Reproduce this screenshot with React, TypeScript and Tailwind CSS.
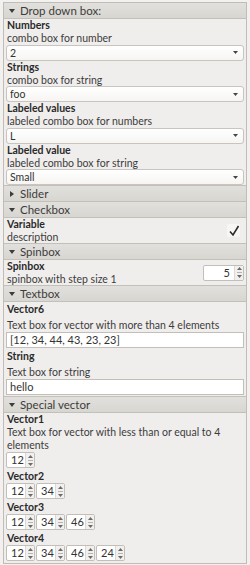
import { ReactNode } from "react"

const Header = ({ title, open = true }: { title: string; open?: boolean }) => (
	<div className="h-[16px] flex items-center border-b border-[#c3c0ba] bg-gradient-to-b from-[#e2e0dc] to-[#d8d6d1] text-[#3c3c3c]">
		<div className="w-[14px] flex justify-center pl-[2px]">
			{open ? (
				<svg width="6" height="4" viewBox="0 0 6 4"><polygon points="0,0 6,0 3,4" fill="#3c3c3c" /></svg>
			) : (
				<svg width="4" height="6" viewBox="0 0 4 6"><polygon points="0,0 4,3 0,6" fill="#3c3c3c" /></svg>
			)}
		</div>
		<span className="pl-[2px] text-[11.5px] leading-[14px]">{title}</span>
	</div>
)

const Label = ({ children }: { children: ReactNode }) => (
	<div className="font-bold leading-[13px] text-[#2a2a2a]">{children}</div>
)

const Desc = ({ children, tight = false }: { children: ReactNode; tight?: boolean }) => (
	<div className={tight ? "leading-[12.5px] text-[#3c3c3c]" : "leading-[13px] text-[#3c3c3c]"}>{children}</div>
)

const Combo = ({ value }: { value: string }) => (
	<div className="h-[16px] flex items-center justify-between rounded-[3px] border border-[#c8c4be] bg-gradient-to-b from-white to-[#f6f5f3] pl-[3px] pr-[5px]">
		<span className="leading-[14px] text-[#333]">{value}</span>
		<svg width="5" height="3" viewBox="0 0 5 3"><polygon points="0,0 5,0 2.5,3" fill="#444" /></svg>
	</div>
)

const Arrows = () => (
	<div className="w-[9px] flex flex-col items-center justify-center gap-[2px] border-l border-[#dcd9d4] bg-[#f1f0ee]">
		<svg width="5" height="3" viewBox="0 0 5 3"><polygon points="0,3 5,3 2.5,0" fill="#6a6a6a" /></svg>
		<div className="w-[5px] h-px bg-[#b8b5b0]" />
		<svg width="5" height="3" viewBox="0 0 5 3"><polygon points="0,0 5,0 2.5,3" fill="#6a6a6a" /></svg>
	</div>
)

const Spin = ({ value }: { value: number }) => (
	<div className="w-[29px] h-[16px] flex rounded-[2px] border border-[#c2beb8] bg-white">
		<span className="flex-1 pl-[4px] text-[11px] leading-[14px] text-[#333]">{value}</span>
		<Arrows />
	</div>
)

const TextBox = ({ value }: { value: string }) => (
	<div className="h-[16px] flex items-center border border-[#c2beb8] bg-white pl-[3px]">
		<span className="text-[11px] leading-[14px] text-[#333]">{value}</span>
	</div>
)

const App = () => {
	const vectors = [
		{ name: "Vector2", values: [12, 34] },
		{ name: "Vector3", values: [12, 34, 46] },
		{ name: "Vector4", values: [12, 34, 46, 24] },
	]

	return (
		<div className="w-[250px] h-[565px] bg-[#f2f1f0] pt-[2px] px-[3px] text-[10.5px] font-['Lato','Liberation_Sans',sans-serif]">
			<div className="w-[244px] border border-[#c0bdb7] bg-[#f0eeec]">
				<Header title="Drop down box:" />
				<div className="px-[2px] border-b border-[#c3c0ba]">
					<div className="pl-[1px]"><Label>Numbers</Label><Desc tight>combo box for number</Desc></div>
					<Combo value="2" />
					<div className="pl-[1px]"><Label>Strings</Label><Desc tight>combo box for string</Desc></div>
					<Combo value="foo" />
					<div className="pl-[1px]"><Label>Labeled values</Label><Desc tight>labeled combo box for numbers</Desc></div>
					<Combo value="L" />
					<div className="pl-[1px]"><Label>Labeled value</Label><Desc tight>labeled combo box for string</Desc></div>
					<Combo value="Small" />
				</div>

				<Header title="Slider" open={false} />

				<Header title="Checkbox" />
				<div className="h-[26px] flex items-center justify-between px-[3px] border-b border-[#c3c0ba]">
					<div><Label>Variable</Label><Desc>description</Desc></div>
					<div className="w-[13px] h-[13px] mr-[3px] flex items-center justify-center rounded-[2px] bg-[#f7f6f5]">
						<svg width="12" height="12" viewBox="0 0 12 12"><path d="M2 6.5 L5 10 L10.5 1" fill="none" stroke="#2a2a2a" strokeWidth="1.6" /></svg>
					</div>
				</div>

				<Header title="Spinbox" />
				<div className="h-[26px] flex items-center justify-between pl-[3px] pr-[2px] border-b border-[#c3c0ba]">
					<div><Label>Spinbox</Label><Desc>spinbox with step size 1</Desc></div>
					<div className="w-[41px] h-[16px] flex rounded-[2px] border border-[#c2beb8] bg-white">
						<span className="flex-1 pr-[4px] text-right text-[11px] leading-[14px] text-[#333]">5</span>
						<Arrows />
					</div>
				</div>

				<Header title="Textbox" />
				<div className="px-[2px] pt-[1px] pb-px border-b border-[#c3c0ba]">
					<div className="pl-[1px]"><Label>Vector6</Label></div>
					<div className="pl-[1px] mt-[3px]"><Desc>Text box for vector with more than 4 elements</Desc></div>
					<TextBox value="[12, 34, 44, 43, 23, 23]" />
					<div className="pl-[1px] mt-[2px]"><Label>String</Label></div>
					<div className="pl-[1px] mt-[3px]"><Desc>Text box for string</Desc></div>
					<TextBox value="hello" />
				</div>

				<Header title="Special vector" />
				<div className="px-[2px] pb-[2px]">
					<div className="pl-[1px] pr-[20px]">
						<Label>Vector1</Label>
						<Desc>Text box for vector with less than or equal to 4 elements</Desc>
					</div>
					<div className="flex"><Spin value={12} /></div>
					{vectors.map(v => (
						<div key={v.name} className="mt-[2px]">
							<div className="pl-[1px]"><Label>{v.name}</Label></div>
							<div className="flex gap-[1px]">
								{v.values.map((n, i) => <Spin key={i} value={n} />)}
							</div>
						</div>
					))}
				</div>
			</div>
		</div>
	)
}

export default App
